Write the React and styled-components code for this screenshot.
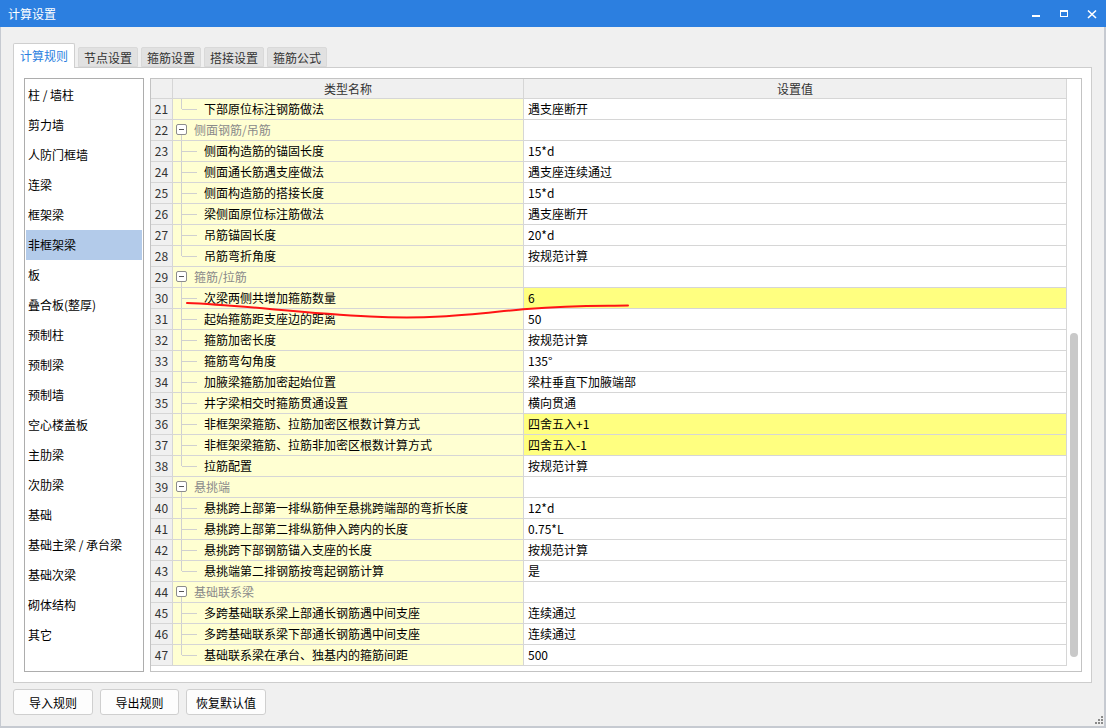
import React from 'react'
import styled, { createGlobalStyle } from 'styled-components'

const GlobalStyle = createGlobalStyle`
  html, body {
    margin: 0;
    padding: 0;
    background: #f0f0f0;
  }
  * {
    box-sizing: border-box;
  }
`

const font = `"Noto Sans CJK SC", "Microsoft YaHei", "Noto Sans", sans-serif`

const Window = styled.div`
  position: relative;
  width: 1106px;
  height: 728px;
  display: flex;
  flex-direction: column;
  background: #f0f0f0;
  font-family: ${font};
  font-size: 12px;
  color: #000;
  overflow: hidden;
`
const TitleBar = styled.div`
  height: 27px;
  flex: none;
  display: flex;
  align-items: center;
  justify-content: space-between;
  padding-left: 8px;
  background: #2c7fe0;
  color: #fff;
  font-size: 12px;
`
const Controls = styled.div`
  display: flex;
  align-items: center;
  height: 100%;
`
const CtrlButton = styled.div`
  width: 28px;
  height: 100%;
  display: flex;
  align-items: center;
  justify-content: center;
`
const Content = styled.div`
  flex: 1;
  display: flex;
  flex-direction: column;
  padding: 16px 12px 0 12px;
  border-left: 1px solid #c6cad1;
  border-right: 2px solid #c6cad1;
  border-bottom: 2px solid #c6cad1;
`
const TabBar = styled.div`
  display: flex;
  align-items: flex-end;
  gap: 3px;
  height: 24px;
`
const Tab = styled.div`
  position: relative;
  z-index: ${p => (p.$active ? 1 : 0)};
  width: ${p => (p.$active ? 62 : 60)}px;
  height: ${p => (p.$active ? 25 : 20)}px;
  margin-bottom: ${p => (p.$active ? -1 : 0)}px;
  display: flex;
  align-items: center;
  justify-content: center;
  padding-bottom: ${p => (p.$active ? 1 : 0)}px;
  background: ${p => (p.$active ? '#fff' : '#e1e1e1')};
  border: 1px solid ${p => (p.$active ? '#cfcfcf' : '#d9d9d9')};
  border-bottom: ${p => (p.$active ? 'none' : '1px solid #d9d9d9')};
  border-radius: 2px 2px 0 0;
  color: ${p => (p.$active ? '#2c7fe0' : '#333')};
`
const Panel = styled.div`
  height: 616px;
  display: flex;
  gap: 6px;
  padding: 10px;
  background: #fff;
  border: 1px solid #cdcdcd;
`
const NavList = styled.div`
  width: 120px;
  flex: none;
  padding: 1px;
  border: 1px solid #adadad;
  background: #fff;
`
const NavItem = styled.div`
  height: 30px;
  line-height: 30px;
  padding-left: 2px;
  background: ${p => (p.$selected ? '#b3cbea' : 'transparent')};
  white-space: nowrap;
`
const Table = styled.div`
  flex: 1;
  display: flex;
  border: 1px solid #c3c3c3;
  background: #fff;
`
const Grid = styled.div`
  width: 916px;
  display: flex;
  flex-direction: column;
`
const Row = styled.div`
  display: grid;
  grid-template-columns: 22px 351px 543px;
  height: ${p => (p.$header ? 20 : 21)}px;
`
const Cell = styled.div`
  display: flex;
  align-items: center;
  border-right: 1px solid #d6d6d6;
  border-bottom: 1px solid #d6d6d6;
  white-space: nowrap;
  overflow: hidden;
  line-height: 20px;
`
const HeadCell = styled(Cell)`
  justify-content: center;
  background: #f0f0f0;
  color: #333;
`
const NumCell = styled(Cell)`
  justify-content: center;
  background: #f0f0f0;
  color: #333;
`
const NameCell = styled(Cell)`
  background: #ffffd2;
`
const ValueCell = styled(Cell)`
  padding-left: 4px;
  background: ${p => (p.$hl ? '#ffff80' : '#fff')};
`
const GroupText = styled.span`
  color: #8a8a8a;
`
const ScrollTrack = styled.div`
  width: 14px;
  flex: none;
  padding: 254px 3px 0 3px;
  background: #fff;
`
const Thumb = styled.div`
  width: 8px;
  height: 324px;
  border-radius: 4px;
  background: #c9c9c9;
`
const ButtonRow = styled.div`
  display: flex;
  gap: 7px;
  margin-top: 6px;
`
const Button = styled.div`
  width: ${p => p.$w || 79}px;
  height: 26px;
  display: flex;
  align-items: center;
  justify-content: center;
  border: 1px solid #cfcfcf;
  border-radius: 3px;
  background: #fdfdfd;
  color: #000;
`
const Annotation = styled.svg`
  position: absolute;
  left: 180px;
  top: 295px;
  pointer-events: none;
`
const Grip = styled.svg`
  position: absolute;
  right: 3px;
  bottom: 4px;
`

const navItems = [
  '柱 / 墙柱', '剪力墙', '人防门框墙', '连梁', '框架梁', '非框架梁', '板', '叠合板(整厚)',
  '预制柱', '预制梁', '预制墙', '空心楼盖板', '主肋梁', '次肋梁', '基础', '基础主梁 / 承台梁',
  '基础次梁', '砌体结构', '其它',
]

const rows = [
  { n: 21, name: '下部原位标注钢筋做法', value: '遇支座断开', last: true },
  { n: 22, group: '侧面钢筋/吊筋' },
  { n: 23, name: '侧面构造筋的锚固长度', value: '15*d' },
  { n: 24, name: '侧面通长筋遇支座做法', value: '遇支座连续通过' },
  { n: 25, name: '侧面构造筋的搭接长度', value: '15*d' },
  { n: 26, name: '梁侧面原位标注筋做法', value: '遇支座断开' },
  { n: 27, name: '吊筋锚固长度', value: '20*d' },
  { n: 28, name: '吊筋弯折角度', value: '按规范计算', last: true },
  { n: 29, group: '箍筋/拉筋' },
  { n: 30, name: '次梁两侧共增加箍筋数量', value: '6', hl: true },
  { n: 31, name: '起始箍筋距支座边的距离', value: '50' },
  { n: 32, name: '箍筋加密长度', value: '按规范计算' },
  { n: 33, name: '箍筋弯勾角度', value: '135°' },
  { n: 34, name: '加腋梁箍筋加密起始位置', value: '梁柱垂直下加腋端部' },
  { n: 35, name: '井字梁相交时箍筋贯通设置', value: '横向贯通' },
  { n: 36, name: '非框架梁箍筋、拉筋加密区根数计算方式', value: '四舍五入+1', hl: true },
  { n: 37, name: '非框架梁箍筋、拉筋非加密区根数计算方式', value: '四舍五入-1', hl: true },
  { n: 38, name: '拉筋配置', value: '按规范计算', last: true },
  { n: 39, group: '悬挑端' },
  { n: 40, name: '悬挑跨上部第一排纵筋伸至悬挑跨端部的弯折长度', value: '12*d' },
  { n: 41, name: '悬挑跨上部第二排纵筋伸入跨内的长度', value: '0.75*L' },
  { n: 42, name: '悬挑跨下部钢筋锚入支座的长度', value: '按规范计算' },
  { n: 43, name: '悬挑端第二排钢筋按弯起钢筋计算', value: '是', last: true },
  { n: 44, group: '基础联系梁' },
  { n: 45, name: '多跨基础联系梁上部通长钢筋遇中间支座', value: '连续通过' },
  { n: 46, name: '多跨基础联系梁下部通长钢筋遇中间支座', value: '连续通过' },
  { n: 47, name: '基础联系梁在承台、独基内的箍筋间距', value: '500', last: true },
]

const GroupGuide = () => (
  <svg width="21" height="20" style={{ flex: 'none' }}>
    <rect x="3.5" y="4.5" width="10" height="10" rx="1.5" fill="#fff" stroke="#8c8c8c" />
    <line x1="6" y1="9.5" x2="11" y2="9.5" stroke="#555" />
    <line x1="8.5" y1="15" x2="8.5" y2="20" stroke="#d0d0d0" />
  </svg>
)

const ChildGuide = ({ last }) => (
  <svg width="31" height="20" style={{ flex: 'none' }}>
    <line x1="8.5" y1="0" x2="8.5" y2={last ? 10 : 20} stroke="#d0d0d0" />
    <line x1="9" y1="10.5" x2="24" y2="10.5" stroke="#d0d0d0" />
  </svg>
)

const App = () => (
  <Window>
    <GlobalStyle />
    <TitleBar>
      <span>计算设置</span>
      <Controls>
        <CtrlButton>
          <svg width="10" height="10"><rect x="1" y="6" width="8" height="2" fill="#fff" /></svg>
        </CtrlButton>
        <CtrlButton>
          <svg width="10" height="10">
            <rect x="1.5" y="1.5" width="7" height="6" fill="none" stroke="#fff" />
            <rect x="1" y="1" width="8" height="2" fill="#fff" />
          </svg>
        </CtrlButton>
        <CtrlButton>
          <svg width="10" height="10">
            <path d="M1 1.5 L9 9 M9 1.5 L1 9" stroke="#fff" strokeWidth="1.6" />
          </svg>
        </CtrlButton>
      </Controls>
    </TitleBar>
    <Content>
      <TabBar>
        <Tab $active>计算规则</Tab>
        <Tab>节点设置</Tab>
        <Tab>箍筋设置</Tab>
        <Tab>搭接设置</Tab>
        <Tab>箍筋公式</Tab>
      </TabBar>
      <Panel>
        <NavList>
          {navItems.map(item => (
            <NavItem key={item} $selected={item === '非框架梁'}>{item}</NavItem>
          ))}
        </NavList>
        <Table>
          <Grid>
            <Row $header>
              <HeadCell />
              <HeadCell>类型名称</HeadCell>
              <HeadCell>设置值</HeadCell>
            </Row>
            {rows.map(r => (
              <Row key={r.n}>
                <NumCell>{r.n}</NumCell>
                <NameCell>
                  {r.group ? (
                    <>
                      <GroupGuide />
                      <GroupText>{r.group}</GroupText>
                    </>
                  ) : (
                    <>
                      <ChildGuide last={r.last} />
                      <span>{r.name}</span>
                    </>
                  )}
                </NameCell>
                <ValueCell $hl={r.hl}>{r.value}</ValueCell>
              </Row>
            ))}
          </Grid>
          <ScrollTrack>
            <Thumb />
          </ScrollTrack>
        </Table>
      </Panel>
      <ButtonRow>
        <Button $w={80}>导入规则</Button>
        <Button>导出规则</Button>
        <Button $w={80}>恢复默认值</Button>
      </ButtonRow>
    </Content>
    <Annotation width="460" height="30" viewBox="0 0 460 30">
      <path
        d="M7 8 C 60 10, 120 18, 190 21.5 S 300 18, 347 14 S 420 11, 448 10.5"
        fill="none"
        stroke="#ff1414"
        strokeWidth="2"
        strokeLinecap="round"
      />
    </Annotation>
    <Grip width="8" height="8">
      <rect x="6" y="0" width="2" height="2" fill="#8a8a8a" />
      <rect x="3" y="3" width="2" height="2" fill="#8a8a8a" />
      <rect x="6" y="3" width="2" height="2" fill="#8a8a8a" />
      <rect x="0" y="6" width="2" height="2" fill="#8a8a8a" />
      <rect x="3" y="6" width="2" height="2" fill="#8a8a8a" />
      <rect x="6" y="6" width="2" height="2" fill="#8a8a8a" />
    </Grip>
  </Window>
)

export default App
